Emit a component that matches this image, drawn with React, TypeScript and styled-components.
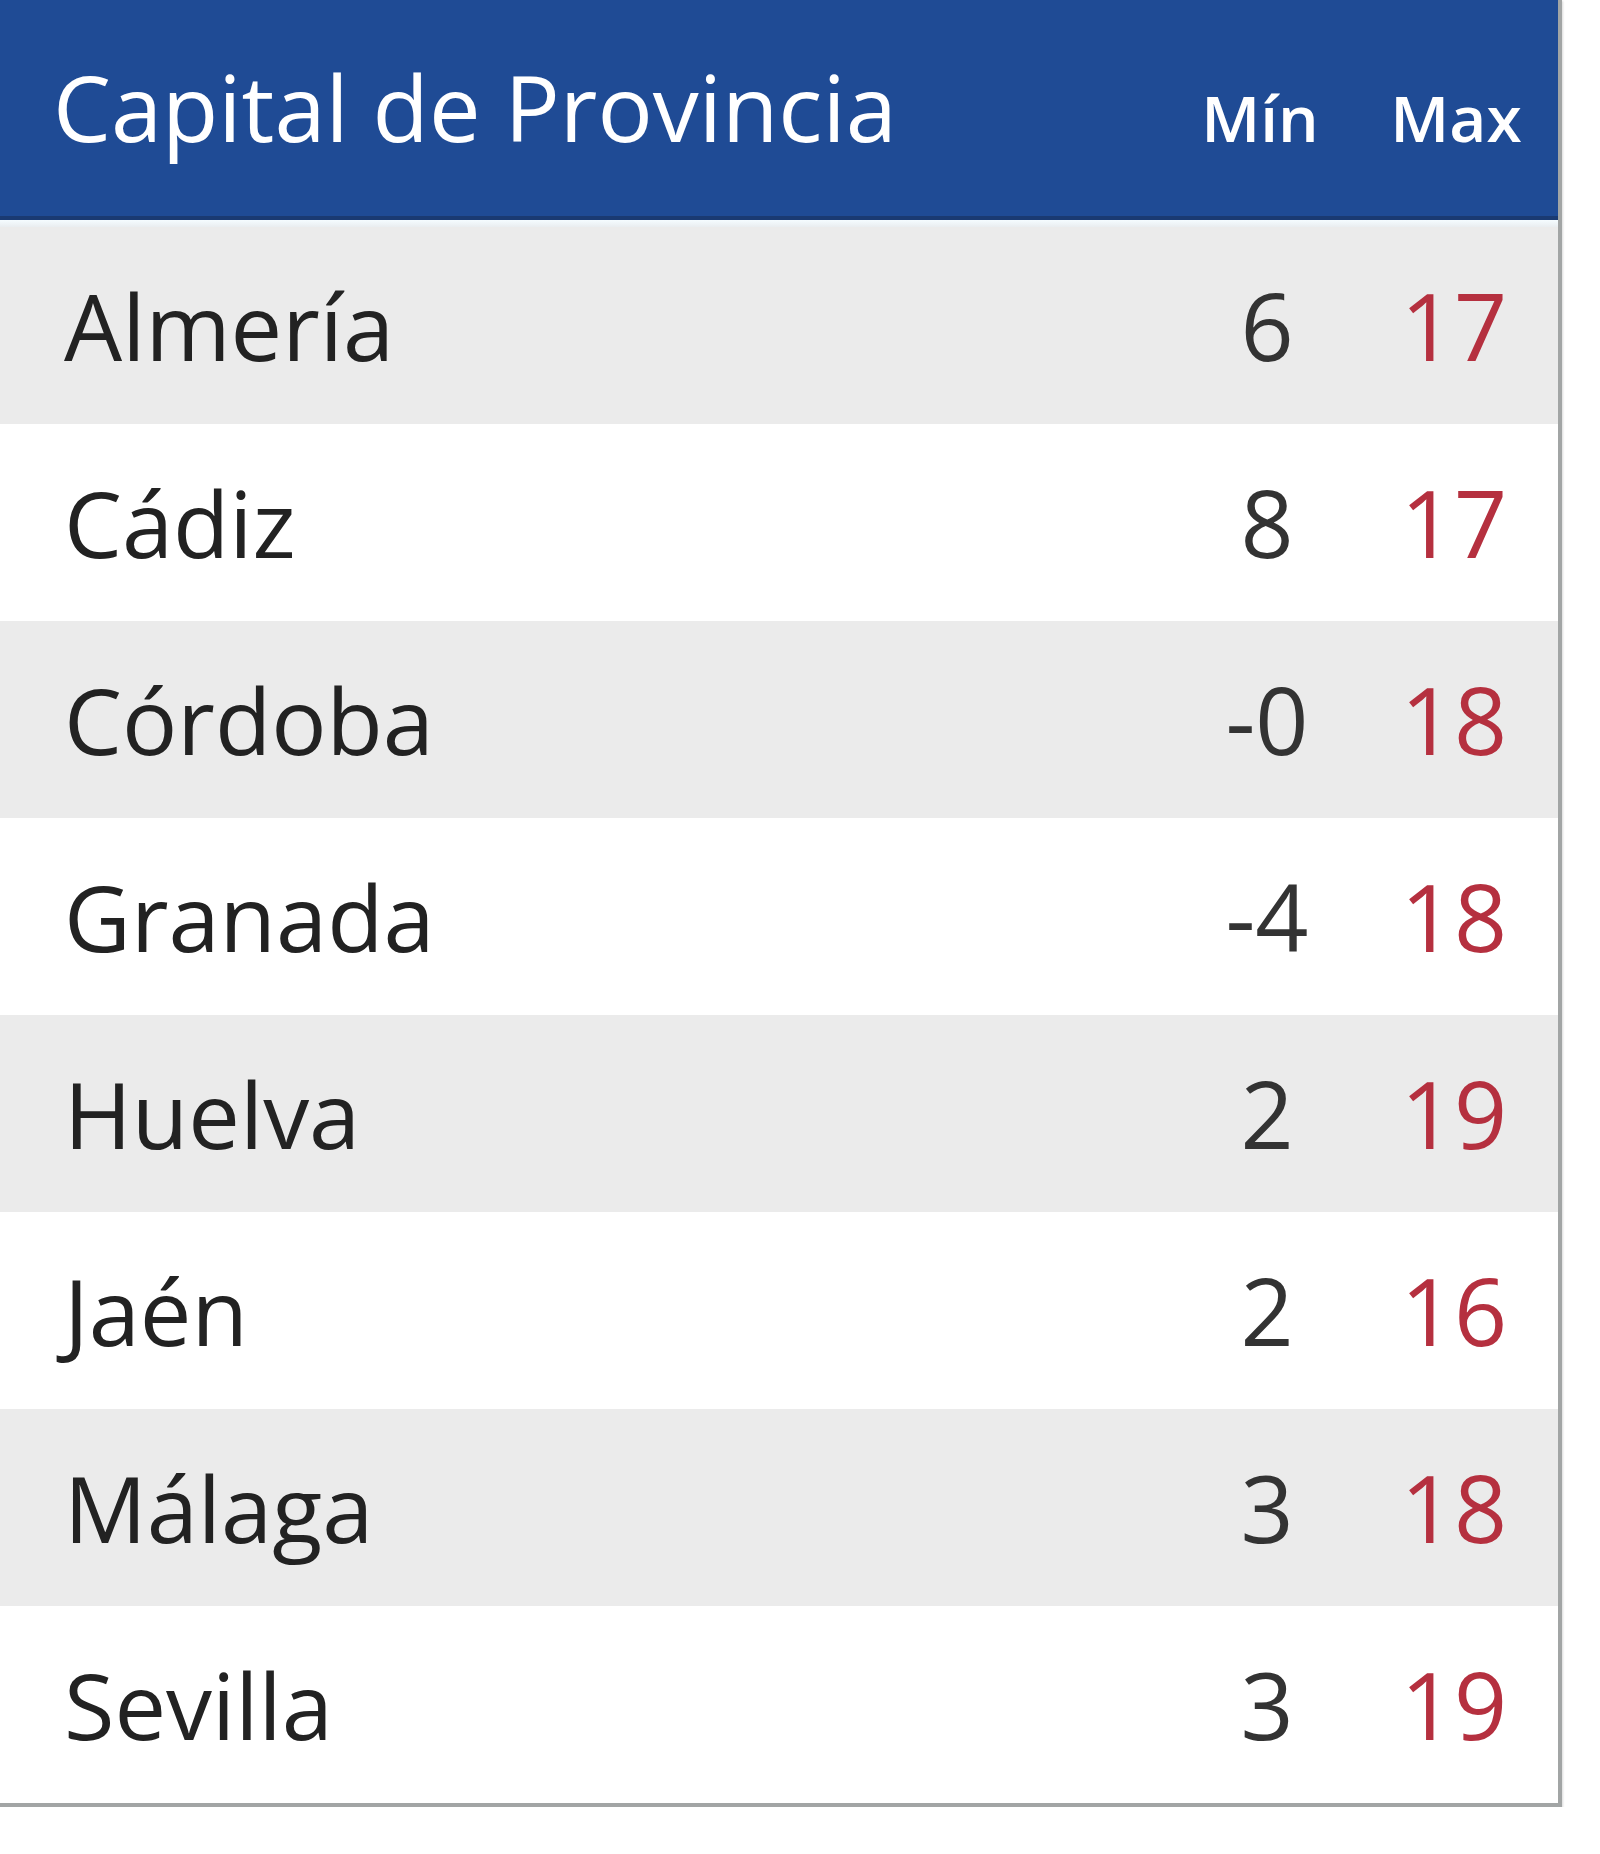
import React from 'react';
import styled, { createGlobalStyle } from 'styled-components';

const GlobalStyle = createGlobalStyle`
  body {
    margin: 0;
    background: #fff;
    font-family: "Open Sans", "Liberation Sans", sans-serif;
  }
`;

const Table = styled.div`
  width: 1558px;
  border-right: 4px solid #a2a5a5;
  border-bottom: 4px solid #a2a5a5;
  box-shadow: 1px 1px 2px rgba(0, 0, 0, 0.15);
  background: #fff;
`;

const Header = styled.div`
  display: grid;
  grid-template-columns: 1fr 196px 196px;
  align-items: baseline;
  height: 220px;
  box-sizing: border-box;
  padding: 61px 4px 0 53px;
  background-color: #1f4b95;
  border-bottom: 4px solid #1a3a72;
  color: #fff;
`;

const Title = styled.div`
  font-size: 92px;
  line-height: 92px;
  font-weight: 400;
`;

const ColHead = styled.div`
  font-size: 64px;
  line-height: 64px;
  font-weight: 600;
  text-align: center;
`;

const Strip = styled.div`
  height: 7px;
  background: linear-gradient(#f5fcff, #e9edf0);
`;

const Row = styled.div<{ $alt: boolean }>`
  display: grid;
  grid-template-columns: 1fr 178px 196px;
  align-items: center;
  height: 197px;
  padding: 0 6px 0 64px;
  background-color: ${(p) => (p.$alt ? '#ebebeb' : '#fff')};
  font-size: 93px;
  line-height: 93px;
`;

const City = styled.div`
  color: #222;
  font-size: 92px;
`;

const Temp = styled.div<{ $max?: boolean }>`
  text-align: center;
  color: ${(p) => (p.$max ? '#b5303f' : '#333')};
`;

const data = [
  { city: 'Almería', min: '6', max: '17' },
  { city: 'Cádiz', min: '8', max: '17' },
  { city: 'Córdoba', min: '-0', max: '18' },
  { city: 'Granada', min: '-4', max: '18' },
  { city: 'Huelva', min: '2', max: '19' },
  { city: 'Jaén', min: '2', max: '16' },
  { city: 'Málaga', min: '3', max: '18' },
  { city: 'Sevilla', min: '3', max: '19' },
];

const App: React.FC = () => {
  return (
    <>
      <GlobalStyle />
      <Table>
        <Header>
          <Title>Capital de Provincia</Title>
          <ColHead>Mín</ColHead>
          <ColHead>Max</ColHead>
        </Header>
        <Strip />
        {data.map((d, i) => (
          <Row key={d.city} $alt={i % 2 === 0}>
            <City>{d.city}</City>
            <Temp>{d.min}</Temp>
            <Temp $max>{d.max}</Temp>
          </Row>
        ))}
      </Table>
    </>
  );
};

export default App;
